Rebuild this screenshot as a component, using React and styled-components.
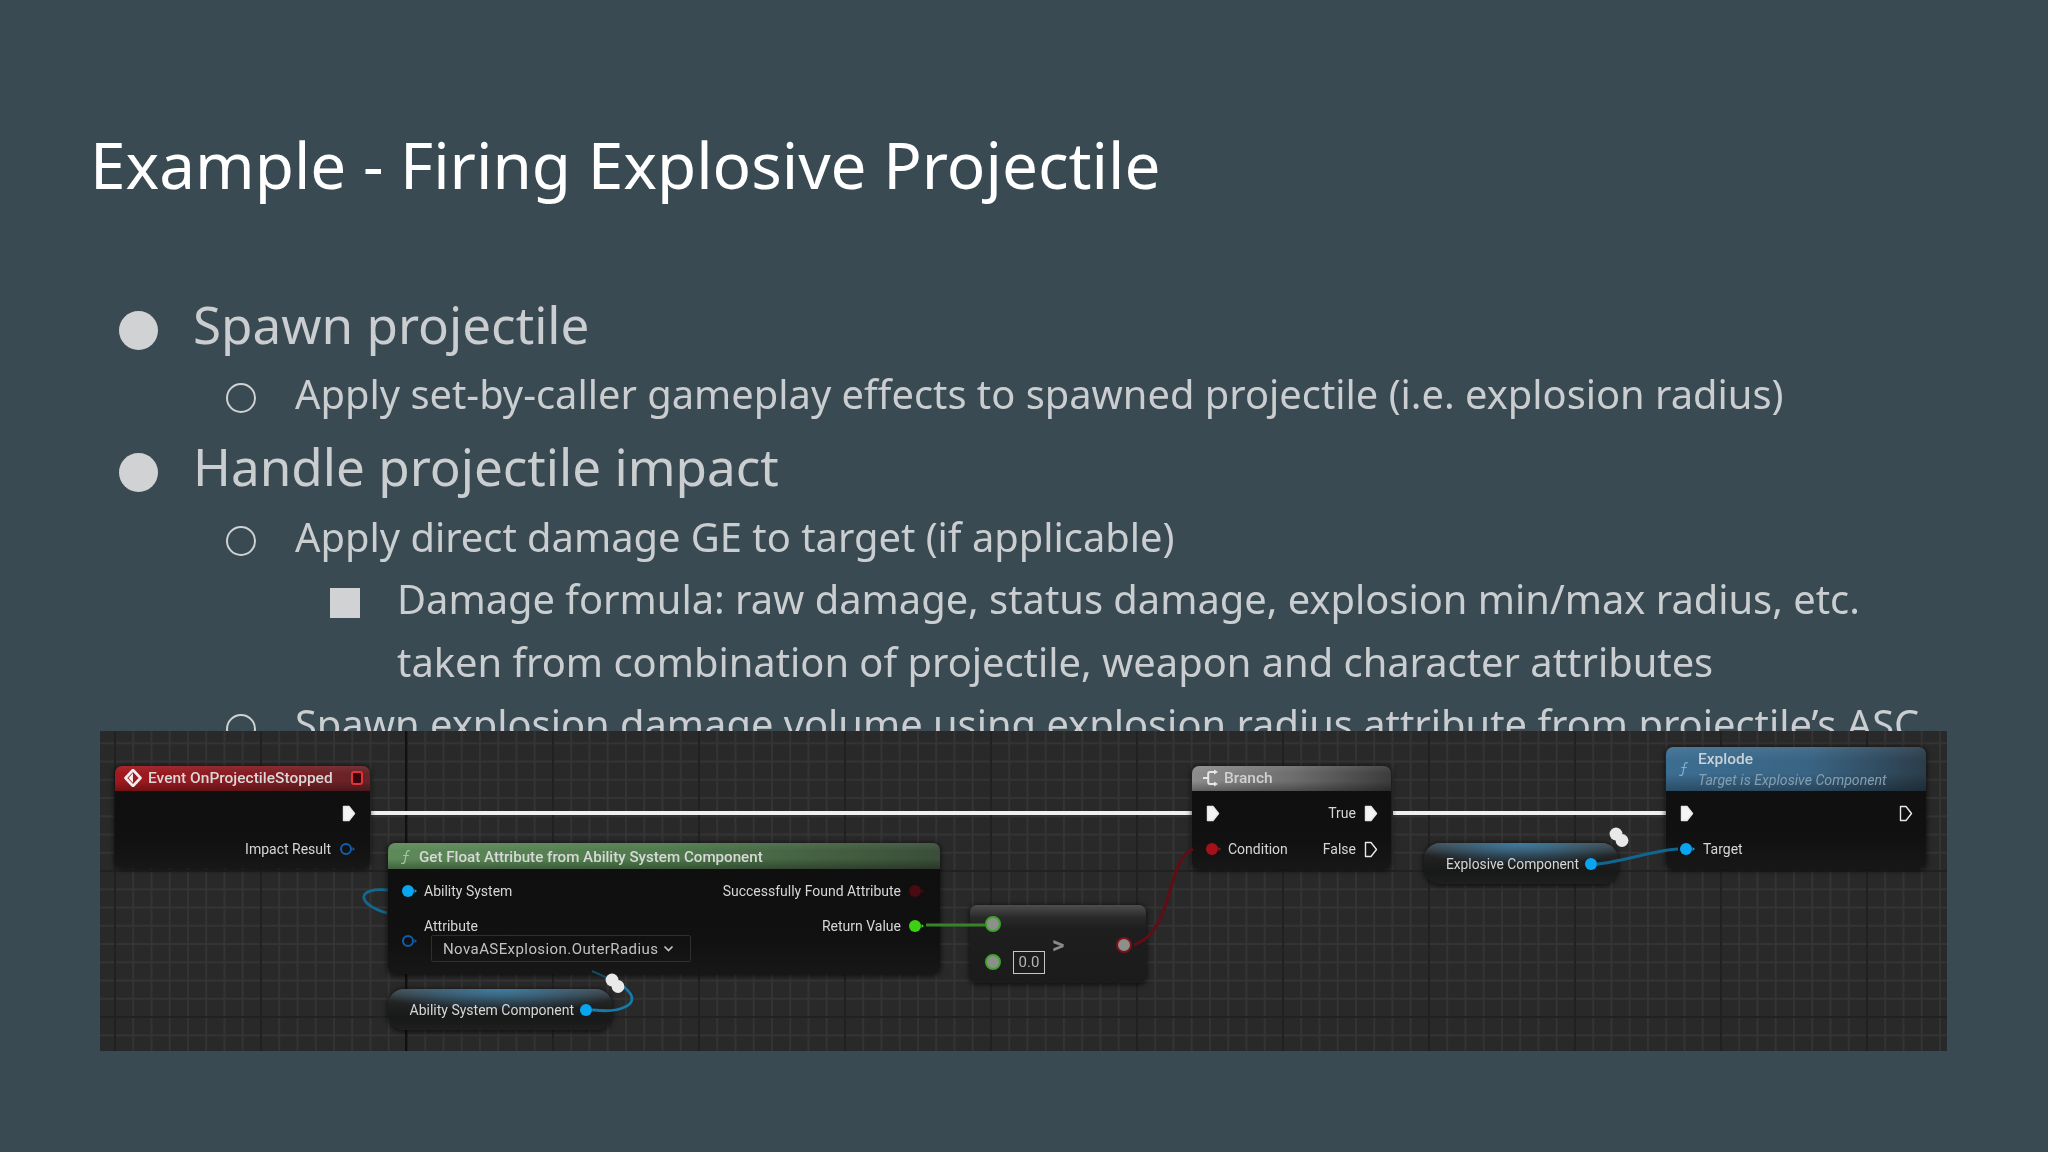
import React from "react";
import styled, { createGlobalStyle } from "styled-components";

const Global = createGlobalStyle`
  html, body { margin: 0; padding: 0; background: #3a4a53; }
`;

const Slide = styled.div`
  position: relative;
  width: 2048px;
  height: 1152px;
  overflow: hidden;
  background: #3a4a53;
  font-family: "Noto Sans", sans-serif;
  box-sizing: border-box;
  padding: 118px 91px 0 90px;
`;

const Title = styled.h1`
  margin: 0 0 75px;
  font-size: 63.8px;
  line-height: 94px;
  font-weight: 400;
  color: #ffffff;
  filter: blur(0.3px);
`;

const List = styled.div`
  display: flex;
  flex-direction: column;
  color: #cbced0;
  filter: blur(0.3px);
`;

const Item = styled.div`
  position: relative;
  box-sizing: border-box;
  padding-left: ${(p) => p.$indent}px;
  font-size: ${(p) => p.$size}px;
  line-height: ${(p) => p.$lh}px;
  margin-top: ${(p) => p.$mt || 0}px;
`;

const Marker = styled.span`
  position: absolute;
  box-sizing: border-box;
  left: ${(p) => p.$left}px;
  top: ${(p) => p.$top}px;
  width: ${(p) => p.$size}px;
  height: ${(p) => p.$size}px;
  border-radius: ${(p) => (p.$kind === "square" ? "0" : "50%")};
  background: ${(p) => (p.$kind === "ring" ? "transparent" : "#d0d2d3")};
  border: ${(p) => (p.$kind === "ring" ? "2px solid #d0d2d3" : "none")};
`;

const Panel = styled.div`
  position: absolute;
  left: 100px;
  top: 731px;
  width: 1847px;
  height: 320px;
  overflow: hidden;
  font-family: Roboto, sans-serif;
  color: #d6d6d6;
  background-color: #292929;
  background-image:
    linear-gradient(90deg, #101010 0 2px, transparent 2px),
    linear-gradient(90deg, #212121 0 2px, transparent 2px),
    linear-gradient(0deg, #212121 0 2px, transparent 2px),
    linear-gradient(90deg, #343434 0 1.5px, transparent 1.5px),
    linear-gradient(0deg, #343434 0 1.5px, transparent 1.5px);
  background-size: 1847px 100%, 146px 100%, 100% 146px, 18.25px 100%, 100% 18.25px;
  background-position: 305px 0, 14px 0, 0 -5px, 14px 0, 0 -5px;
  filter: blur(0.6px);
`;

const WireLayer = styled.svg`
  position: absolute;
  left: 0;
  top: 0;
  z-index: ${(p) => p.$z};
`;

const Node = styled.div`
  position: absolute;
  z-index: 1;
  box-sizing: border-box;
  left: ${(p) => p.$x - 100}px;
  top: ${(p) => p.$y - 731}px;
  width: ${(p) => p.$w}px;
  height: ${(p) => p.$h}px;
  border-radius: 7px;
  background: linear-gradient(180deg, #0d0e0d 0%, #101110 75%, #161716 100%);
  box-shadow: 0 1px 5px 1px rgba(0, 0, 0, 0.6);
  overflow: hidden;
`;

const PureNode = styled(Node)`
  border-radius: ${(p) => p.$r}px;
  background: ${(p) => p.$bg};
  display: flex;
  align-items: center;
  justify-content: flex-end;
  gap: 5px;
  padding: ${(p) => p.$pad};
  font-size: ${(p) => p.$fs}px;
`;

const CompareNode = styled(Node)`
  background: linear-gradient(180deg, #4e4e4e 0, #2a2a2a 12px, #1e1e1e 24px, #1b1b1b 100%);
`;

const Header = styled.div`
  box-sizing: border-box;
  height: ${(p) => p.$h || 25}px;
  padding: ${(p) => p.$pt || 0}px ${(p) => p.$pr || 8}px ${(p) => p.$pb || 0}px ${(p) => p.$pl}px;
  display: flex;
  align-items: center;
  gap: ${(p) => p.$gap || 6}px;
  font-size: ${(p) => p.$fs || 15.5}px;
  font-weight: 500;
  color: ${(p) => p.$color || "#d8d8d8"};
  background:
    linear-gradient(180deg, rgba(255, 255, 255, 0.07) 0%, rgba(0, 0, 0, 0) 30%, rgba(0, 0, 0, 0) 60%, rgba(0, 0, 0, 0.3) 100%),
    ${(p) => p.$bg};
  white-space: nowrap;
`;

const HeaderTitle = styled.span`
  flex: 1;
`;

const StackTitle = styled.div`
  display: flex;
  flex-direction: column;
  line-height: 20px;
  font-size: 15.5px;
  font-weight: 500;
  color: #c9d2d8;
`;

const Subtitle = styled.span`
  font-size: 14.15px;
  font-weight: 400;
  font-style: italic;
  color: #83a0b2;
  padding-top: 1px;
`;

const Rows = styled.div`
  padding-top: 4px;
  display: flex;
  flex-direction: column;
`;

const Row = styled.div`
  box-sizing: border-box;
  height: ${(p) => p.$h || 36}px;
  padding: ${(p) => p.$pad};
  display: flex;
  align-items: center;
  justify-content: ${(p) => p.$justify || "space-between"};
  gap: ${(p) => p.$gap || 8}px;
  font-size: 14px;
  white-space: nowrap;
`;

const RowGroup = styled.span`
  display: flex;
  align-items: center;
  gap: ${(p) => p.$gap || 8}px;
`;

const TwoCols = styled.div`
  position: relative;
  display: flex;
  justify-content: space-between;
`;

const AttrLabel = styled.div`
  position: absolute;
  left: 36px;
  top: 49px;
  font-size: 14px;
`;

const AttrPin = styled.div`
  position: absolute;
  left: 13px;
  top: 65px;
  line-height: 0;
`;

const Dropdown = styled.div`
  position: absolute;
  left: 43px;
  top: 66px;
  box-sizing: border-box;
  width: 260px;
  height: 27px;
  padding-left: 11px;
  display: flex;
  align-items: center;
  gap: 5px;
  border: 1px solid #2f2f2f;
  border-radius: 2px;
  font-size: 15px;
  letter-spacing: 0.42px;
  color: #c2c2c2;
`;

const CompareBody = styled.div`
  position: relative;
  height: 100%;
`;

const ComparePin = styled.span`
  position: absolute;
  left: ${(p) => p.$x}px;
  top: ${(p) => p.$y}px;
  box-sizing: border-box;
  width: 16px;
  height: 16px;
  border-radius: 50%;
  border: 2px solid ${(p) => p.$color};
  background: #8d8f8a;
`;

const ValueBox = styled.span`
  position: absolute;
  left: 43px;
  top: 46px;
  box-sizing: border-box;
  width: 32px;
  height: 23px;
  border: 1px solid #c6c6c6;
  font-size: 15px;
  line-height: 21px;
  text-align: center;
  color: #b5b5b5;
`;

const Operator = styled.span`
  position: absolute;
  left: 82px;
  top: 26px;
  font-size: 24px;
  font-weight: 700;
  line-height: 28px;
  color: #8b8b8b;
`;

const Exec = ({ filled = true }) => (
  <svg width="14" height="17" viewBox="0 0 14 17">
    <path
      d="M1.5 1.5 H7 L12.5 8.5 L7 15.5 H1.5 Z"
      fill={filled ? "#f4f4f4" : "none"}
      stroke="#e8e8e8"
      strokeWidth="1.4"
      strokeLinejoin="round"
    />
  </svg>
);

const Dot = ({ color, hollow }) => (
  <svg width="17" height="14" viewBox="0 0 17 14">
    <circle
      cx="7"
      cy="7"
      r={hollow ? 5 : 6}
      fill={hollow ? "none" : color}
      stroke={color}
      strokeWidth={hollow ? 2 : 0}
    />
    <path d="M13.5 5 L16 7 L13.5 9 Z" fill={color} />
  </svg>
);

const FuncIcon = ({ color }) => (
  <svg width="12" height="16" viewBox="0 0 12 16">
    <path d="M10 2 C7 0.5 6.5 3 6 6 L4.8 12.5 C4.3 14.5 3 15 1.2 14 M3.2 6.5 H8.8" fill="none" stroke={color} strokeWidth="1.2" />
  </svg>
);

const EventIcon = () => (
  <svg width="18" height="18" viewBox="0 0 18 18">
    <path d="M9 1 L16.5 9 L9 17 L1.5 9 Z" fill="none" stroke="#eeeeee" strokeWidth="2.6" strokeLinejoin="round" />
    <path d="M9 4 L4.5 9 L9 14 Z" fill="#eeeeee" />
  </svg>
);

const StopIcon = () => (
  <svg width="12" height="14" viewBox="0 0 12 14">
    <rect x="1" y="1" width="10" height="12" rx="2" fill="#3a0508" stroke="#e0333a" strokeWidth="2" />
  </svg>
);

const BranchIcon = () => (
  <svg width="18" height="18" viewBox="0 0 18 18">
    <path d="M1 9 H6 M13 3 H8 C6.5 3 6.2 4 6.2 5 V13 C6.2 14 6.5 15 8 15 H13" fill="none" stroke="#e6e6e6" strokeWidth="2" />
    <path d="M12 0.5 L16 3 L12 5.5 Z M12 12.5 L16 15 L12 17.5 Z" fill="#e6e6e6" />
  </svg>
);

const Chevron = () => (
  <svg width="11" height="8" viewBox="0 0 11 8">
    <path d="M1.5 1.5 L5.5 5.5 L9.5 1.5" fill="none" stroke="#c8c8c8" strokeWidth="1.6" />
  </svg>
);

const Wires = () => (
  <WireLayer $z={0} width="1847" height="320" viewBox="0 0 1847 320">
    <path d="M271 82 H1092" stroke="#efefef" strokeWidth="4.2" fill="none" />
    <path d="M1293 82 H1566" stroke="#efefef" strokeWidth="4.2" fill="none" />
    <path d="M288 159 C258 156 254 172 287 182" stroke="#12688f" strokeWidth="2.8" fill="none" />
  </WireLayer>
);

const Knot = ({ x, y }) => (
  <g fill="#e9e9e9">
    <circle cx={x} cy={y} r="6.4" />
    <circle cx={x + 6} cy={y + 6.5} r="6.4" />
  </g>
);

const TopWires = () => (
  <WireLayer $z={2} width="1847" height="320" viewBox="0 0 1847 320">
    <path d="M826 194 H886" stroke="#37842a" strokeWidth="3" fill="none" />
    <path d="M1034 214 C1075 200 1065 130 1093 118" stroke="#5e0f15" strokeWidth="3.2" fill="none" />
    <path d="M1498 133 C1525 130 1560 118 1578 118" stroke="#0f6690" strokeWidth="3" fill="none" />
    <path d="M494 279 C518 282 546 274 524 256" stroke="#147aa8" strokeWidth="2.8" fill="none" />
    <path d="M524 256 C512 248 500 244 492 240" stroke="#114a63" strokeWidth="2" fill="none" />
    <Knot x={512} y={249} />
    <Knot x={1516} y={103} />
  </WireLayer>
);

const varBg =
  "radial-gradient(ellipse 60% 22px at 50% 0, #3d7ba0 0%, rgba(61,123,160,0) 100%), linear-gradient(180deg, #4a4a4a 0, #232323 12px, #171818 70%, #1e1f1f 100%)";

export default function App() {
  return (
    <Slide>
      <Global />
      <Title>Example - Firing Explosive Projectile</Title>
      <List>
        <Item $indent={103} $size={51.2} $lh={74}>
          <Marker $kind="disc" $left={29} $top={23.5} $size={39} />
          Spawn projectile
        </Item>
        <Item $indent={205} $size={39.84} $lh={66}>
          <Marker $kind="ring" $left={136} $top={22} $size={30} />
          Apply set-by-caller gameplay effects to spawned projectile (i.e. explosion radius)
        </Item>
        <Item $indent={103} $size={51.2} $lh={74} $mt={2}>
          <Marker $kind="disc" $left={29} $top={23.5} $size={39} />
          Handle projectile impact
        </Item>
        <Item $indent={205} $size={39.84} $lh={66} $mt={0.5}>
          <Marker $kind="ring" $left={136} $top={22.5} $size={30} />
          Apply direct damage GE to target (if applicable)
        </Item>
        <Item $indent={307} $size={39.84} $lh={62.6} $mt={-1.5}>
          <Marker $kind="square" $left={240} $top={20} $size={30} />
          Damage formula: raw damage, status damage, explosion min/max radius, etc. taken from combination of projectile, weapon and character attributes
        </Item>
        <Item $indent={205} $size={39.84} $lh={66} $mt={-2.5}>
          <Marker $kind="ring" $left={136} $top={23.5} $size={30} />
          Spawn explosion damage volume using explosion radius attribute from projectile’s ASC
        </Item>
      </List>

      <Panel>
        <Wires />

        <Node $x={115} $y={766} $w={255} $h={102}>
          <Header $pl={9} $pr={7} $pb={2} $bg="linear-gradient(90deg, #a3181e 0%, #861c22 50%, #652428 100%)">
            <EventIcon />
            <HeaderTitle>Event OnProjectileStopped</HeaderTitle>
            <StopIcon />
          </Header>
          <Rows>
            <Row $justify="flex-end" $pad="0 14px 0 0"><Exec /></Row>
            <Row $justify="flex-end" $pad="0 14px 0 0">Impact Result <Dot color="#0f5fb0" hollow /></Row>
          </Rows>
        </Node>

        <Node $x={388} $y={843} $w={552} $h={131}>
          <Header $h={26} $pl={12} $gap={7} $pt={2} $fs={15.15} $bg="linear-gradient(90deg, #5e8a5a 0%, #4f7a4c 50%, #3b4e39 100%)">
            <FuncIcon color="#a9c4a5" />
            <HeaderTitle>Get Float Attribute from Ability System Component</HeaderTitle>
          </Header>
          <TwoCols>
            <Rows>
              <Row $pad="0 0 0 13px"><RowGroup $gap={6}><Dot color="#0aa5f0" />Ability System</RowGroup></Row>
            </Rows>
            <Rows>
              <Row $justify="flex-end" $pad="0 15px 0 0" $gap={7} $h={35}>Successfully Found Attribute <Dot color="#4a0a10" /></Row>
              <Row $justify="flex-end" $pad="0 15px 0 0" $gap={7}>Return Value <Dot color="#3ed015" /></Row>
            </Rows>
            <AttrLabel>Attribute</AttrLabel>
            <AttrPin><Dot color="#0f5fb0" hollow /></AttrPin>
            <Dropdown>NovaASExplosion.OuterRadius <Chevron /></Dropdown>
          </TwoCols>
        </Node>

        <PureNode $x={388} $y={989} $w={224} $h={41} $r={16} $fs={14} $bg={varBg} $pad="0 16px 0 0">
          Ability System Component <Dot color="#0aa5f0" />
        </PureNode>

        <CompareNode $x={970} $y={905} $w={176} $h={78}>
          <CompareBody>
            <ComparePin $x={15} $y={11} $color="#3fa52a" />
            <ComparePin $x={15} $y={49} $color="#3fa52a" />
            <ValueBox>0.0</ValueBox>
            <Operator>&gt;</Operator>
            <ComparePin $x={146} $y={32} $color="#7b1219" />
          </CompareBody>
        </CompareNode>

        <Node $x={1192} $y={766} $w={199} $h={103}>
          <Header $pl={10} $gap={4} $pb={2} $bg="linear-gradient(90deg, #8d8d8d 0%, #6e6e6e 50%, #3c3c3c 100%)" $color="#d0d0d0">
            <BranchIcon />
            <HeaderTitle>Branch</HeaderTitle>
          </Header>
          <Rows>
            <Row $pad="0 13px 0 14px">
              <Exec />
              <RowGroup>True <Exec /></RowGroup>
            </Row>
            <Row $pad="0 13px 0 13px">
              <RowGroup $gap={6}><Dot color="#a5101a" />Condition</RowGroup>
              <RowGroup>False <Exec filled={false} /></RowGroup>
            </Row>
          </Rows>
        </Node>

        <PureNode $x={1424} $y={843} $w={194} $h={41} $r={16} $fs={13.8} $bg={varBg} $pad="0 17px 0 0">
          Explosive Component <Dot color="#0aa5f0" />
        </PureNode>

        <Node $x={1666} $y={747} $w={260} $h={122}>
          <Header $h={44} $pl={12} $gap={8} $bg="linear-gradient(90deg, #3c6e92 0%, #3a6483 55%, #2b3d4b 100%)">
            <FuncIcon color="#7fb0cf" />
            <StackTitle>
              Explode
              <Subtitle>Target is Explosive Component</Subtitle>
            </StackTitle>
          </Header>
          <Rows>
            <Row $pad="0 13px 0 14px">
              <Exec />
              <Exec filled={false} />
            </Row>
            <Row $pad="0 14px 0 13px" $justify="flex-start" $gap={7}><Dot color="#0aa5f0" />Target</Row>
          </Rows>
        </Node>

        <TopWires />
      </Panel>
    </Slide>
  );
}
